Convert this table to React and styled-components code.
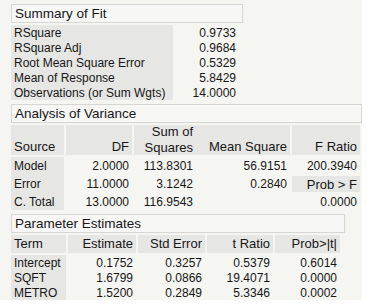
import React from "react";
import styled, { createGlobalStyle } from "styled-components";

const GlobalStyle = createGlobalStyle`
  body {
    margin: 0;
    background: #ffffff;
    font-family: "Liberation Sans", Arial, sans-serif;
    color: #161616;
  }
`;

const Report = styled.div`
  width: 351px;
  height: 296px;
  padding: 4px 0 0 11px;
  background: #f5f5f1;
  display: flex;
  flex-direction: column;
  gap: 4px;
  overflow: hidden;
`;

const Section = styled.section`
  display: flex;
  flex-direction: column;
  gap: 2px;
`;

const OutlineHeader = styled.div`
  box-sizing: border-box;
  width: ${(p) => p.width}px;
  height: 19px;
  padding-left: 3px;
  display: flex;
  align-items: center;
  background: #f7f7f6;
  border: 1px solid #d6d6d4;
  font-size: 13.5px;
`;

const Grid = styled.div`
  display: grid;
  grid-template-columns: ${(p) => p.cols};
  column-gap: 2px;
  font-size: 12px;
`;

const Cell = styled.div`
  height: ${(p) => p.h || 15}px;
  padding: 0 3px;
  display: flex;
  align-items: center;
  justify-content: ${(p) => (p.left ? "flex-start" : "flex-end")};
  background: ${(p) => (p.shade ? "#e6e6e4" : "transparent")};
  white-space: nowrap;
`;

const HeadCell = styled.div`
  height: ${(p) => p.h || 18}px;
  margin-bottom: 2px;
  margin-left: ${(p) => (p.joined ? "-2px" : "0")};
  padding: 0 3px;
  display: flex;
  flex-direction: column;
  justify-content: ${(p) => (p.bottom ? "flex-end" : "center")};
  align-items: ${(p) => (p.left ? "flex-start" : "flex-end")};
  background: #e6e6e4;
  font-size: 13px;
  line-height: 16px;
  white-space: nowrap;
`;

const ProbCell = styled(Cell)`
  font-size: 13px;
  margin: 2px 0 1px;
  height: 16px;
`;

const summary = [
  ["RSquare", "0.9733"],
  ["RSquare Adj", "0.9684"],
  ["Root Mean Square Error", "0.5329"],
  ["Mean of Response", "5.8429"],
  ["Observations (or Sum Wgts)", "14.0000"],
];

const params = [
  ["Intercept", "0.1752", "0.3257", "0.5379", "0.6014"],
  ["SQFT", "1.6799", "0.0866", "19.4071", "0.0000"],
  ["METRO", "1.5200", "0.2849", "5.3346", "0.0002"],
];

const SummaryOfFit = () => (
  <Section>
    <OutlineHeader width={232}>Summary of Fit</OutlineHeader>
    <Grid cols="162px 64px">
      {summary.map(([label, value]) => (
        <React.Fragment key={label}>
          <Cell left shade>{label}</Cell>
          <Cell>{value}</Cell>
        </React.Fragment>
      ))}
    </Grid>
  </Section>
);

const Anova = () => (
  <Section>
    <OutlineHeader width={351}>Analysis of Variance</OutlineHeader>
    <Grid cols="53px 66px 62px 92px 68px">
      <HeadCell left bottom h={30}>Source</HeadCell>
      <HeadCell bottom h={30}>DF</HeadCell>
      <HeadCell h={30}>
        <span>Sum of</span>
        <span>Squares</span>
      </HeadCell>
      <HeadCell bottom joined h={30}>Mean Square</HeadCell>
      <HeadCell bottom h={30}>F Ratio</HeadCell>

      <Cell left shade h={17}>Model</Cell>
      <Cell h={17}>2.0000</Cell>
      <Cell h={17}>113.8301</Cell>
      <Cell h={17}>56.9151</Cell>
      <Cell h={17}>200.3940</Cell>

      <Cell left shade h={19}>Error</Cell>
      <Cell h={19}>11.0000</Cell>
      <Cell h={19}>3.1242</Cell>
      <Cell h={19}>0.2840</Cell>
      <ProbCell shade>Prob &gt; F</ProbCell>

      <Cell left shade h={17}>C. Total</Cell>
      <Cell h={17}>13.0000</Cell>
      <Cell h={17}>116.9543</Cell>
      <Cell h={17} />
      <Cell h={17}>0.0000</Cell>
    </Grid>
  </Section>
);

const ParameterEstimates = () => (
  <Section>
    <OutlineHeader width={334}>Parameter Estimates</OutlineHeader>
    <Grid cols="55px 68px 67px 66px 65px">
      <HeadCell left>Term</HeadCell>
      <HeadCell>Estimate</HeadCell>
      <HeadCell>Std Error</HeadCell>
      <HeadCell>t Ratio</HeadCell>
      <HeadCell>Prob&gt;|t|</HeadCell>
      {params.map(([term, ...vals]) => (
        <React.Fragment key={term}>
          <Cell left shade>{term}</Cell>
          {vals.map((v, i) => (
            <Cell key={i}>{v}</Cell>
          ))}
        </React.Fragment>
      ))}
    </Grid>
  </Section>
);

export default function App() {
  return (
    <>
      <GlobalStyle />
      <Report>
        <SummaryOfFit />
        <Anova />
        <ParameterEstimates />
      </Report>
    </>
  );
}
